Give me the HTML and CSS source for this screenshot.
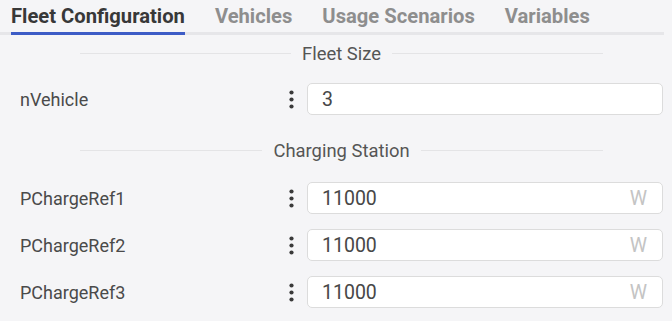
FILE: index.html
```html
<!DOCTYPE html>
<html>
<head>
<meta charset="utf-8">
<link rel="stylesheet" href="styles.css">
</head>
<body>
<div class="page">
  <nav class="tabs">
    <span class="tab active">Fleet Configuration</span>
    <span class="tab">Vehicles</span>
    <span class="tab">Usage Scenarios</span>
    <span class="tab">Variables</span>
  </nav>
  <div class="form">
    <div class="divider first"><span>Fleet Size</span></div>
    <div class="row">
      <span class="label">nVehicle</span>
      <svg class="dots" width="5" height="19" viewBox="0 0 5 19"><circle cx="2.5" cy="2.5" r="2.1"/><circle cx="2.5" cy="9.5" r="2.1"/><circle cx="2.5" cy="16.5" r="2.1"/></svg>
      <div class="input"><span class="value">3</span></div>
    </div>
    <div class="divider"><span>Charging Station</span></div>
    <div class="row">
      <span class="label">PChargeRef1</span>
      <svg class="dots" width="5" height="19" viewBox="0 0 5 19"><circle cx="2.5" cy="2.5" r="2.1"/><circle cx="2.5" cy="9.5" r="2.1"/><circle cx="2.5" cy="16.5" r="2.1"/></svg>
      <div class="input"><span class="value">11000</span><span class="unit">W</span></div>
    </div>
    <div class="row">
      <span class="label">PChargeRef2</span>
      <svg class="dots" width="5" height="19" viewBox="0 0 5 19"><circle cx="2.5" cy="2.5" r="2.1"/><circle cx="2.5" cy="9.5" r="2.1"/><circle cx="2.5" cy="16.5" r="2.1"/></svg>
      <div class="input"><span class="value">11000</span><span class="unit">W</span></div>
    </div>
    <div class="row">
      <span class="label">PChargeRef3</span>
      <svg class="dots" width="5" height="19" viewBox="0 0 5 19"><circle cx="2.5" cy="2.5" r="2.1"/><circle cx="2.5" cy="9.5" r="2.1"/><circle cx="2.5" cy="16.5" r="2.1"/></svg>
      <div class="input"><span class="value">11000</span><span class="unit">W</span></div>
    </div>
  </div>
</div>
</body>
</html>
```
FILE: styles.css
```css
html, body {
  margin: 0;
  padding: 0;
  background: #f5f5f7;
}
body {
  font-family: Roboto, "Liberation Sans", sans-serif;
  color: #444;
}
.page {
  width: 664px;
}
.tabs {
  display: flex;
  gap: 30px;
  padding: 0 11px;
  height: 32px;
  border-bottom: 3px solid #e6e6e9;
}
.tab {
  font-size: 20.2px;
  font-weight: 700;
  color: #8e8e8e;
  line-height: 33px;
  position: relative;
}
.tab.active {
  color: #383838;
}
.tab.active::after {
  content: "";
  position: absolute;
  left: 0;
  right: 0;
  bottom: -3px;
  height: 3px;
  background: #3d5cc6;
}
.form {
  padding: 0 1px 0 20px;
}
.divider {
  display: flex;
  align-items: center;
  gap: 11px;
  margin: 0 60px;
  height: 24px;
  margin-top: 23px;
  margin-bottom: 20px;
  font-size: 18.4px;
  color: #555;
}
.divider.first {
  margin-top: 6px;
  margin-bottom: 18px;
}
.divider::before, .divider::after {
  content: "";
  flex: 1;
  height: 1px;
  background: #e4e4e6;
}
.row {
  display: grid;
  grid-template-columns: 1fr 17px 356px;
  column-gap: 7px;
  align-items: center;
  margin-bottom: 15px;
}
.label {
  font-size: 18px;
  color: #4a4a4a;
}
.dots {
  justify-self: center;
  fill: #3a3a3a;
}
.input {
  height: 30px;
  border: 1px solid #dcdcdc;
  border-radius: 5px;
  background: #fff;
  display: flex;
  align-items: center;
  justify-content: space-between;
  padding: 0 15px 0 14px;
  font-size: 19.5px;
}
.value {
  color: #474747;
}
.unit {
  color: #c4c4c4;
}
```
